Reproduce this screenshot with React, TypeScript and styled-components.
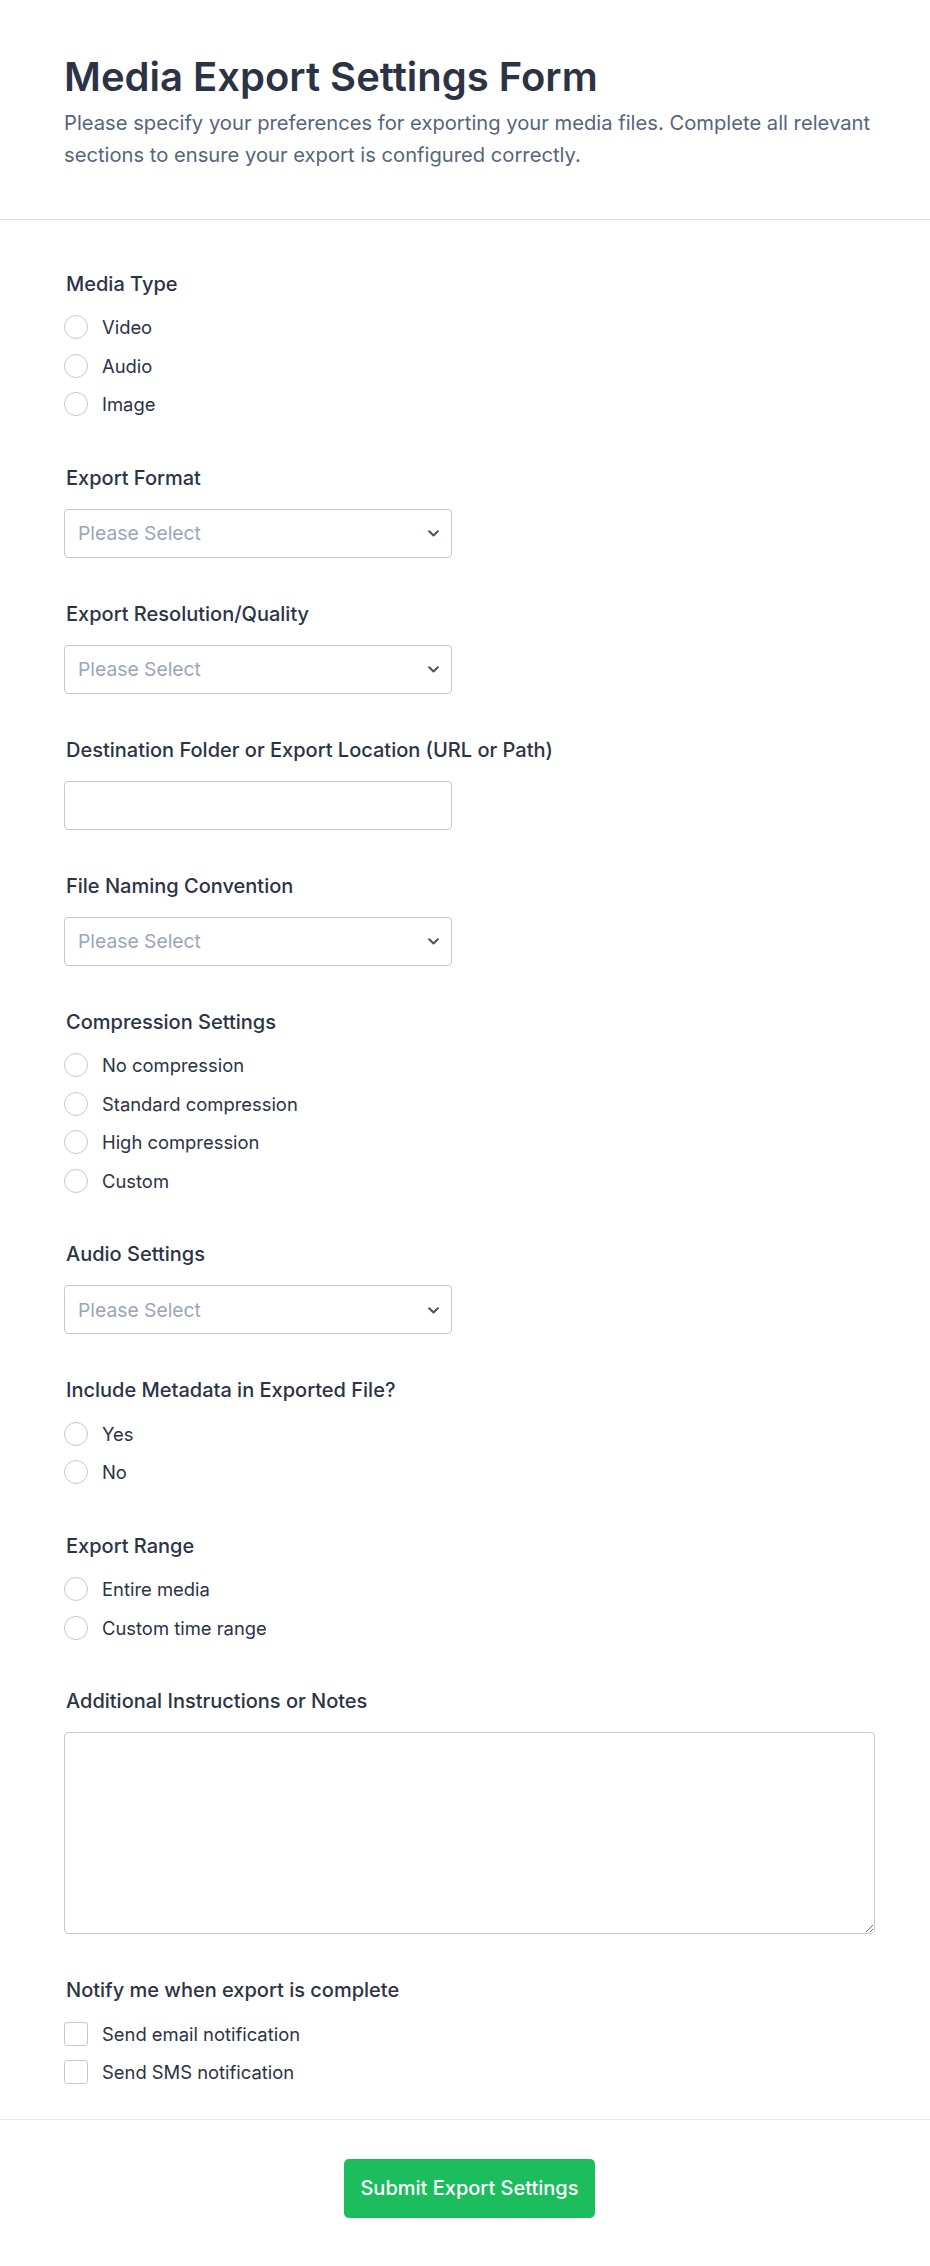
import React from "react";
import styled, { createGlobalStyle } from "styled-components";

const GlobalStyle = createGlobalStyle`
  * { box-sizing: border-box; }
  html, body { margin: 0; padding: 0; background: #ffffff; }
  body {
    font-family: Inter, "Noto Sans", "Liberation Sans", sans-serif;
    font-optical-sizing: none;
    color: #2c3345;
    -webkit-font-smoothing: antialiased;
  }
`;

const Page = styled.div`
  width: 100%;
  background: #ffffff;
`;

const Header = styled.header`
  padding: 53px 55px 48px 64px;
  border-bottom: 1px solid #dcdfe7;
`;

const Title = styled.h1`
  margin: 0;
  font-size: 40px;
  line-height: 48px;
  font-weight: 600;
  color: #2c3345;
`;

const Subtitle = styled.p`
  margin: 6px 0 0;
  font-size: 20.2px;
  line-height: 32px;
  font-weight: 400;
  color: #57647e;
`;

const FormBody = styled.form`
  display: flex;
  flex-direction: column;
  gap: 43px;
  padding: 50.5px 55px 29px 64px;
`;

const Field = styled.div`
  display: flex;
  flex-direction: column;
`;

const FieldLabel = styled.label`
  display: block;
  font-size: 20px;
  line-height: 27px;
  font-weight: 500;
  color: #2c3345;
  margin: 0 0 17px 2px;
`;

const OptionList = styled.div`
  display: flex;
  flex-direction: column;
  gap: 7.5px;
  margin: -3px 0 2px;
`;

const OptionRow = styled.label`
  display: flex;
  align-items: center;
  gap: 14px;
  height: 31px;
  font-size: 18.4px;
  font-weight: 400;
  color: #2c3345;
  cursor: pointer;
`;

const RadioCircle = styled.span`
  flex: 0 0 auto;
  width: 24px;
  height: 24px;
  border-radius: 50%;
  border: 1.5px solid #c3c8d4;
  background: #ffffff;
`;

const CheckSquare = styled.span`
  flex: 0 0 auto;
  width: 24px;
  height: 24px;
  border-radius: 3px;
  border: 1.5px solid #c3c8d4;
  background: #ffffff;
`;

const SelectWrap = styled.div`
  position: relative;
  width: 388px;
`;

const Select = styled.select`
  appearance: none;
  -webkit-appearance: none;
  display: block;
  width: 100%;
  height: 49px;
  padding: 0 40px 0 13px;
  border: 1px solid #c5c9d6;
  border-radius: 4px;
  background: #ffffff;
  font-family: inherit;
  font-size: 19.3px;
  color: #9aa5b9;
  outline: none;
`;

const Chevron = styled.svg`
  position: absolute;
  right: 13px;
  top: 50%;
  width: 11px;
  height: 7px;
  margin-top: -3px;
  pointer-events: none;
`;

const TextInput = styled.input`
  display: block;
  width: 388px;
  height: 49px;
  padding: 0 13px;
  border: 1px solid #c5c9d6;
  border-radius: 4px;
  background: #ffffff;
  font-family: inherit;
  font-size: 19.3px;
  color: #2c3345;
  outline: none;
`;

const TextArea = styled.textarea`
  display: block;
  width: 100%;
  height: 202px;
  padding: 12px 13px;
  border: 1px solid #c5c9d6;
  border-radius: 4px;
  background: #ffffff;
  font-family: inherit;
  font-size: 19.3px;
  color: #2c3345;
  outline: none;
  resize: vertical;
`;

const Footer = styled.footer`
  display: flex;
  justify-content: center;
  padding: 39px 55px 50px 64px;
  border-top: 1px solid #e4e6ee;
`;

const SubmitButton = styled.button`
  height: 59px;
  padding: 0 16px;
  border: none;
  border-radius: 5px;
  background: #1cbd5d;
  color: #ffffff;
  font-family: inherit;
  font-size: 20px;
  font-weight: 500;
  cursor: pointer;
`;

type ChoiceProps = { label: string; options: string[]; kind?: "radio" | "checkbox" };

const ChoiceField = ({ label, options, kind = "radio" }: ChoiceProps) => (
  <Field>
    <FieldLabel as="div">{label}</FieldLabel>
    <OptionList>
      {options.map((o) => (
        <OptionRow key={o}>
          {kind === "radio" ? <RadioCircle /> : <CheckSquare />}
          <span>{o}</span>
        </OptionRow>
      ))}
    </OptionList>
  </Field>
);

const SelectField = ({ label }: { label: string }) => (
  <Field>
    <FieldLabel>{label}</FieldLabel>
    <SelectWrap>
      <Select defaultValue="">
        <option value="" disabled>
          Please Select
        </option>
      </Select>
      <Chevron viewBox="0 0 11 7" fill="none">
        <path
          d="M1.2 1.3L5.5 5.5L9.8 1.3"
          stroke="#4b5269"
          strokeWidth="2.1"
          strokeLinecap="round"
          strokeLinejoin="round"
        />
      </Chevron>
    </SelectWrap>
  </Field>
);

export default function App() {
  return (
    <Page>
      <GlobalStyle />
      <Header>
        <Title>Media Export Settings Form</Title>
        <Subtitle>
          Please specify your preferences for exporting your media files. Complete all relevant
          sections to ensure your export is configured correctly.
        </Subtitle>
      </Header>
      <FormBody onSubmit={(e) => e.preventDefault()}>
        <ChoiceField label="Media Type" options={["Video", "Audio", "Image"]} />
        <SelectField label="Export Format" />
        <SelectField label="Export Resolution/Quality" />
        <Field>
          <FieldLabel>Destination Folder or Export Location (URL or Path)</FieldLabel>
          <TextInput type="text" />
        </Field>
        <SelectField label="File Naming Convention" />
        <ChoiceField
          label="Compression Settings"
          options={["No compression", "Standard compression", "High compression", "Custom"]}
        />
        <SelectField label="Audio Settings" />
        <ChoiceField label="Include Metadata in Exported File?" options={["Yes", "No"]} />
        <ChoiceField label="Export Range" options={["Entire media", "Custom time range"]} />
        <Field>
          <FieldLabel>Additional Instructions or Notes</FieldLabel>
          <TextArea />
        </Field>
        <ChoiceField
          label="Notify me when export is complete"
          options={["Send email notification", "Send SMS notification"]}
          kind="checkbox"
        />
      </FormBody>
      <Footer>
        <SubmitButton type="submit">Submit Export Settings</SubmitButton>
      </Footer>
    </Page>
  );
}
